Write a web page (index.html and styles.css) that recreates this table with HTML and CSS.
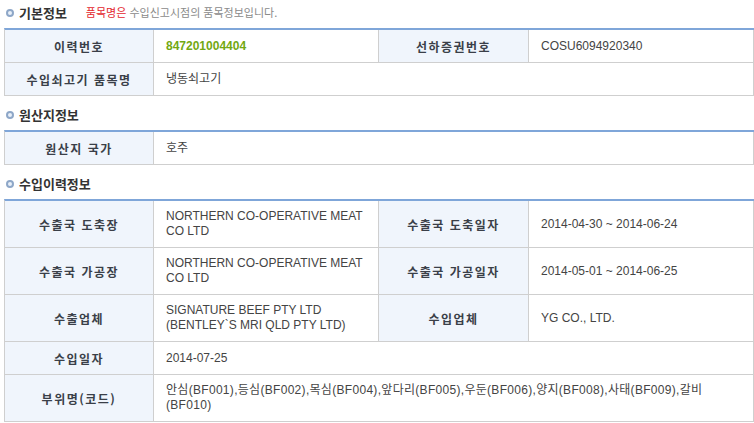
FILE: index.html
```html
<!DOCTYPE html>
<html lang="ko">
<head>
<meta charset="utf-8">
<link rel="stylesheet" href="styles.css">
</head>
<body>
<div class="page">
  <div class="sec-title first">
    <span class="bullet"></span>
    <span class="sec-name">기본정보</span>
    <span class="note"><em>품목명은</em> 수입신고시점의 품목정보입니다.</span>
  </div>
  <div class="grid">
    <div class="lbl">이력번호</div>
    <div class="val"><b class="trace">847201004404</b></div>
    <div class="lbl">선하증권번호</div>
    <div class="val">COSU6094920340</div>
    <div class="lbl">수입쇠고기 품목명</div>
    <div class="val span3">냉동쇠고기</div>
  </div>

  <div class="sec-title">
    <span class="bullet"></span>
    <span class="sec-name">원산지정보</span>
  </div>
  <div class="grid">
    <div class="lbl">원산지 국가</div>
    <div class="val span3">호주</div>
  </div>

  <div class="sec-title">
    <span class="bullet"></span>
    <span class="sec-name">수입이력정보</span>
  </div>
  <div class="grid">
    <div class="lbl">수출국 도축장</div>
    <div class="val">NORTHERN CO-OPERATIVE MEAT CO LTD</div>
    <div class="lbl">수출국 도축일자</div>
    <div class="val">2014-04-30 ~ 2014-06-24</div>
    <div class="lbl">수출국 가공장</div>
    <div class="val">NORTHERN CO-OPERATIVE MEAT CO LTD</div>
    <div class="lbl">수출국 가공일자</div>
    <div class="val">2014-05-01 ~ 2014-06-25</div>
    <div class="lbl">수출업체</div>
    <div class="val">SIGNATURE BEEF PTY LTD (BENTLEY`S MRI QLD PTY LTD)</div>
    <div class="lbl">수입업체</div>
    <div class="val">YG CO., LTD.</div>
    <div class="lbl">수입일자</div>
    <div class="val span3">2014-07-25</div>
    <div class="lbl">부위명(코드)</div>
    <div class="val span3 parts">안심(BF001),등심(BF002),목심(BF004),앞다리(BF005),우둔(BF006),양지(BF008),사태(BF009),갈비(BF010)</div>
  </div>
</div>
</body>
</html>
```
FILE: styles.css
```css
html, body {
  margin: 0;
  padding: 0;
  background: #fff;
}
body {
  font-family: "Liberation Sans", "Noto Sans CJK KR", sans-serif;
  font-size: 12px;
  color: #444;
}
.page {
  padding-left: 4px;
  width: 750px;
}
.sec-title {
  display: flex;
  align-items: center;
  height: 24px;
  margin-top: 6px;
  margin-bottom: 4px;
  padding-left: 2px;
}
.sec-title.first {
  margin-top: 0;
}
.bullet {
  width: 8px;
  height: 8px;
  box-sizing: border-box;
  border-radius: 50%;
  border: 2px solid #8ea7c8;
  background: #e9f0f9;
  margin-right: 5px;
  margin-top: 1px;
}
.sec-name {
  font-family: "Noto Sans CJK KR", sans-serif;
  font-weight: bold;
  font-size: 13px;
  color: #333;
}
.note {
  font-family: "Noto Sans CJK KR", sans-serif;
  font-size: 11px;
  color: #8a8a8a;
  margin-left: 19px;
}
.note em {
  font-style: normal;
  color: #e3262d;
}
.grid {
  display: grid;
  grid-template-columns: 149px 225px 150px 225px;
  border-top: 2px solid #7fa6d9;
  border-left: 1px solid #cfcfcf;
}
.lbl, .val {
  box-sizing: border-box;
  min-height: 33px;
  border-right: 1px solid #cfcfcf;
  border-bottom: 1px solid #cfcfcf;
  display: flex;
  align-items: center;
  line-height: 15px;
  padding: 8px 12px;
}
.lbl {
  background: #f0f5fc;
  justify-content: center;
  text-align: center;
  font-family: "Noto Sans CJK KR", sans-serif;
  font-weight: bold;
  font-size: 12px;
  color: #3a3f48;
  letter-spacing: 1.5px;
}
.val {
  color: #444;
}
.span3 {
  grid-column: span 3;
}
.parts {
  letter-spacing: 0.3px;
}
.trace {
  color: #72a812;
  font-weight: bold;
}
```
